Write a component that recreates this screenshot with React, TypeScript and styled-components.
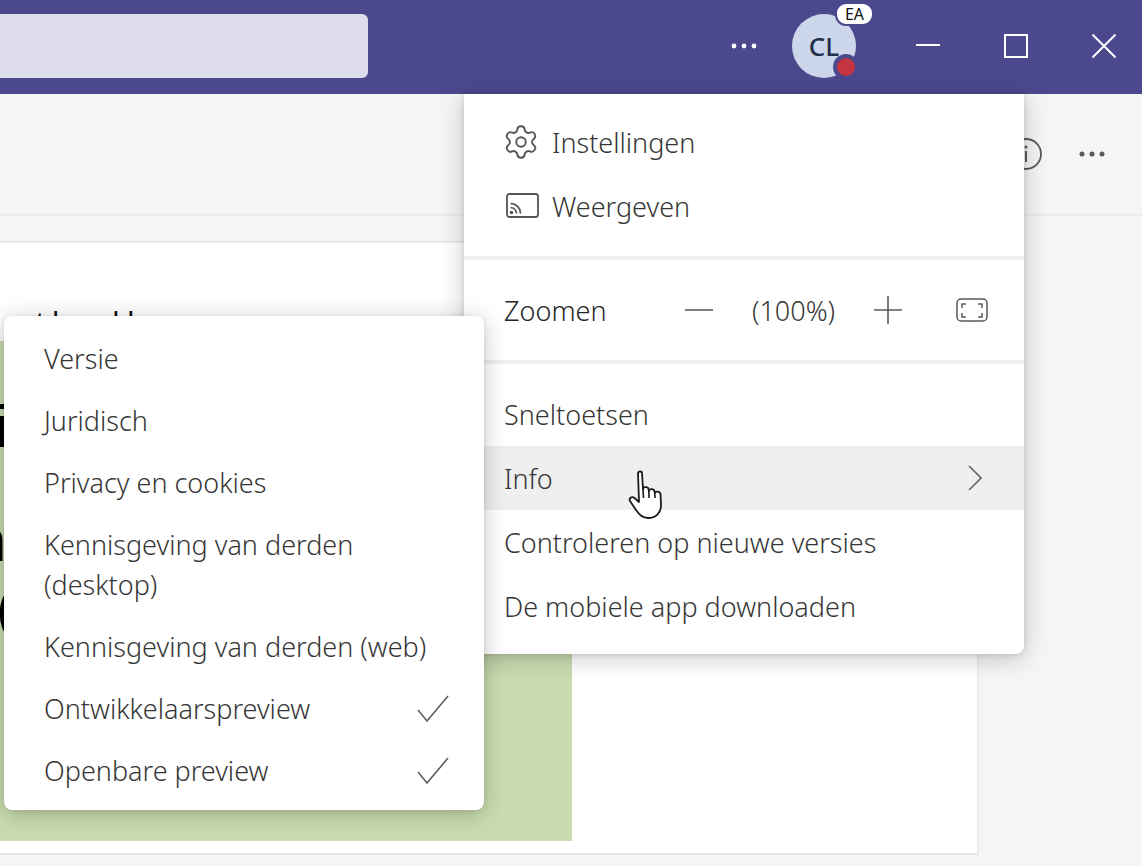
import React from "react";
import styled, { createGlobalStyle } from "styled-components";
import { Settings } from "lucide-react";

const Global = createGlobalStyle`
  html, body { margin: 0; padding: 0; background: #f5f5f5; }
  body { font-family: "Noto Sans", "Open Sans", sans-serif; }
`;

const Page = styled.div`
  position: relative;
  width: 1142px;
  height: 866px;
  overflow: hidden;
  display: flex;
  flex-direction: column;
  background: #f5f5f5;
`;

const TitleBar = styled.header`
  height: 94px;
  flex: none;
  background: #4b488d;
  display: flex;
  align-items: center;
  padding: 0 26px 2px 0;
  box-sizing: border-box;
`;

const SearchBox = styled.div`
  width: 368px;
  height: 64px;
  background: #dcdcea;
  border-radius: 0 6px 6px 0;
`;

const Spacer = styled.div`
  flex: 1;
`;

const TitleIcon = styled.svg<{ $gap?: number }>`
  display: block;
  flex: none;
  margin-left: ${(p) => p.$gap ?? 0}px;
`;

const Avatar = styled.div`
  position: relative;
  width: 64px;
  height: 64px;
  flex: none;
  margin-left: 34px;
  margin-right: 60px;
  border-radius: 50%;
  background: #cdd7ec;
  color: #22304a;
  font-size: 26px;
  font-weight: 500;
  display: flex;
  align-items: center;
  justify-content: center;
`;

const AccountBadge = styled.span`
  position: absolute;
  left: 43px;
  top: -12px;
  width: 35px;
  height: 20px;
  border-radius: 11px;
  background: #fff;
  border: 2px solid #4b488d;
  color: #111;
  font-size: 16px;
  font-weight: 400;
  line-height: 20px;
  text-align: center;
`;

const StatusDot = styled.span`
  position: absolute;
  left: 41px;
  top: 40px;
  width: 18px;
  height: 18px;
  border-radius: 50%;
  background: #c4353f;
  border: 4px solid #4b488d;
`;

const SubHeader = styled.div`
  height: 122px;
  flex: none;
  box-sizing: border-box;
  background: #f5f5f5;
  border-bottom: 2px solid #ececec;
  display: flex;
  align-items: center;
  justify-content: flex-end;
  gap: 36px;
  padding: 0 36px 0 0;
`;

const HeaderIcon = styled.svg`
  display: block;
  flex: none;
`;

const Body = styled.main`
  flex: 1;
  display: flex;
  flex-direction: column;
  padding-top: 25px;
`;

const Card = styled.section`
  width: 979px;
  height: 614px;
  box-sizing: border-box;
  background: #fff;
  border-top: 2px solid #e9e9e9;
  border-right: 2px solid #ececec;
  border-bottom: 2px solid #e6e6e6;
`;

const Caption = styled.div`
  height: 98px;
  box-sizing: border-box;
  padding: 60px 0 0 14px;
  font-family: "Liberation Sans", sans-serif;
  font-size: 30px;
  line-height: 40px;
  color: #111;
  white-space: pre;
`;

const GreenPanel = styled.div`
  width: 572px;
  height: 500px;
  background: #c9dcb0;
  color: #000;
  font-family: "Liberation Sans", sans-serif;
  font-size: 60px;
  line-height: 60px;
  overflow: hidden;
`;

const BigLine = styled.div<{ $top: number; $shift: number }>`
  margin-top: ${(p) => p.$top}px;
  margin-left: ${(p) => p.$shift}px;
`;

const Menu = styled.div`
  position: absolute;
  background: #fff;
  box-shadow: 0 4px 24px rgba(0, 0, 0, 0.22), 0 1px 5px rgba(0, 0, 0, 0.1);
  color: #363636;
  font-size: 27px;
  font-weight: 300;
  box-sizing: border-box;
`;

const MainMenu = styled(Menu)`
  left: 464px;
  top: 94px;
  width: 560px;
  height: 560px;
  border-radius: 0 0 8px 8px;
  display: flex;
  flex-direction: column;
`;

const SubMenu = styled(Menu)`
  left: 4px;
  top: 316px;
  width: 480px;
  height: 494px;
  border-radius: 8px;
  padding: 12px 0 8px;
`;

const MenuSection = styled.div<{ $top: number; $bottom: number }>`
  padding: ${(p) => p.$top}px 0 ${(p) => p.$bottom}px;
`;

const Divider = styled.div`
  height: 4px;
  background: #f0f0f0;
`;

const MenuRow = styled.div<{ $hover?: boolean }>`
  height: 64px;
  display: flex;
  align-items: center;
  padding: 0 42px 0 40px;
  background: ${(p) => (p.$hover ? "#efefef" : "transparent")};
`;

const IconSlot = styled.span`
  width: 48px;
  flex: none;
  display: flex;
  align-items: center;
`;

const GearIcon = styled(Settings)`
  margin-left: -2px;
  flex: none;
`;

const CastIcon = styled.svg`
  margin-left: 2px;
  flex: none;
`;

const RowLabel = styled.span`
  flex: 1;
  white-space: nowrap;
  line-height: 36px;
  padding-top: 2px;
`;

const ZoomRow = styled.div`
  height: 100px;
  display: flex;
  align-items: center;
  padding: 0 36px 0 40px;
  color: #262626;
`;

const ZoomLabel = styled.span`
  width: 181px;
  flex: none;
  padding-top: 1px;
`;

const ZoomValue = styled.span`
  width: 161px;
  flex: none;
  text-align: center;
  color: #363636;
  padding-top: 1px;
`;

const ZoomIcon = styled.svg<{ $gap?: number }>`
  display: block;
  flex: none;
  margin-left: ${(p) => p.$gap ?? 0}px;
`;

const SubRow = styled.div`
  padding: 11px 35px 11px 40px;
  display: flex;
  align-items: center;
  justify-content: space-between;
  line-height: 40px;
`;

const SubLabel = styled.span`
  display: block;
`;

const HandCursor = styled.svg`
  position: absolute;
  left: 628px;
  top: 470px;
`;

const Check = () => (
  <svg width="32" height="28" viewBox="0 0 32 28" fill="none">
    <path d="M1 15 L10 26 L31 1" stroke="#5f5f5f" strokeWidth="1.6" />
  </svg>
);

export default function App() {
  return (
    <Page>
      <Global />
      <TitleBar>
        <SearchBox />
        <Spacer />
        <TitleIcon width="28" height="6" viewBox="0 0 28 6">
          <circle cx="4" cy="3" r="2.4" fill="#fff" />
          <circle cx="14" cy="3" r="2.4" fill="#fff" />
          <circle cx="24" cy="3" r="2.4" fill="#fff" />
        </TitleIcon>
        <Avatar>
          CL
          <AccountBadge>EA</AccountBadge>
          <StatusDot />
        </Avatar>
        <TitleIcon width="24" height="24" viewBox="0 0 24 24">
          <path d="M0 11 H24" stroke="#fff" strokeWidth="2" />
        </TitleIcon>
        <TitleIcon $gap={64} width="24" height="24" viewBox="0 0 24 24">
          <rect x="1" y="1" width="22" height="22" fill="none" stroke="#fff" strokeWidth="2" />
        </TitleIcon>
        <TitleIcon $gap={64} width="24" height="24" viewBox="0 0 24 24">
          <path d="M0.5 0.5 L23.5 23.5 M23.5 0.5 L0.5 23.5" stroke="#fff" strokeWidth="2" />
        </TitleIcon>
      </TitleBar>

      <SubHeader>
        <HeaderIcon width="32" height="32" viewBox="0 0 32 32" fill="none">
          <circle cx="16" cy="16" r="15" stroke="#5a5a5a" strokeWidth="1.8" />
          <path d="M16 13 V24" stroke="#5a5a5a" strokeWidth="2" />
          <circle cx="16" cy="9" r="1.5" fill="#5a5a5a" />
        </HeaderIcon>
        <HeaderIcon width="28" height="6" viewBox="0 0 28 6">
          <circle cx="4" cy="3" r="2.5" fill="#5a5a5a" />
          <circle cx="14" cy="3" r="2.5" fill="#5a5a5a" />
          <circle cx="24" cy="3" r="2.5" fill="#5a5a5a" />
        </HeaderIcon>
      </SubHeader>

      <Body>
        <Card>
          <Caption>{"wt hand l"}</Caption>
          <GreenPanel>
            <BigLine $top={56} $shift={-5}>i</BigLine>
            <BigLine $top={54} $shift={-27}>n</BigLine>
            <BigLine $top={8} $shift={-4}>(</BigLine>
          </GreenPanel>
        </Card>
      </Body>

      <MainMenu>
        <MenuSection $top={16} $bottom={18}>
          <MenuRow>
            <IconSlot>
              <GearIcon size={38} strokeWidth={1.2} color="#555" />
            </IconSlot>
            <RowLabel>Instellingen</RowLabel>
          </MenuRow>
          <MenuRow>
            <IconSlot>
              <CastIcon width="33" height="26" viewBox="0 0 33 26" fill="none">
                <rect x="1" y="1" width="31" height="23" rx="2.5" stroke="#555" strokeWidth="1.8" />
                <path d="M4.5 10.5 a10 10 0 0 1 10 10 M4.5 14.5 a6 6 0 0 1 6 6" stroke="#555" strokeWidth="1.7" />
                <circle cx="5.5" cy="19.5" r="1.8" fill="#555" />
              </CastIcon>
            </IconSlot>
            <RowLabel>Weergeven</RowLabel>
          </MenuRow>
        </MenuSection>
        <Divider />
        <ZoomRow>
          <ZoomLabel>Zoomen</ZoomLabel>
          <ZoomIcon width="28" height="4" viewBox="0 0 28 4">
            <path d="M0 2 H28" stroke="#5a5a5a" strokeWidth="1.6" />
          </ZoomIcon>
          <ZoomValue>(100%)</ZoomValue>
          <ZoomIcon width="28" height="28" viewBox="0 0 28 28">
            <path d="M0 14 H28 M14 0 V28" stroke="#5a5a5a" strokeWidth="1.6" />
          </ZoomIcon>
          <ZoomIcon $gap={54} width="32" height="24" viewBox="0 0 32 24" fill="none">
            <rect x="1" y="1" width="30" height="22" rx="4" stroke="#5a5a5a" strokeWidth="1.5" />
            <path d="M6 10 V6 H10 M22 6 H26 V10 M26 15 V19 H22 M10 19 H6 V15" stroke="#5a5a5a" strokeWidth="1.5" />
          </ZoomIcon>
        </ZoomRow>
        <Divider />
        <MenuSection $top={18} $bottom={16}>
          <MenuRow>
            <RowLabel>Sneltoetsen</RowLabel>
          </MenuRow>
          <MenuRow $hover>
            <RowLabel>Info</RowLabel>
            <svg width="14" height="26" viewBox="0 0 14 26" fill="none">
              <path d="M1 1 L13 13 L1 25" stroke="#666" strokeWidth="1.6" />
            </svg>
          </MenuRow>
          <MenuRow>
            <RowLabel>Controleren op nieuwe versies</RowLabel>
          </MenuRow>
          <MenuRow>
            <RowLabel>De mobiele app downloaden</RowLabel>
          </MenuRow>
        </MenuSection>
      </MainMenu>

      <SubMenu>
        <SubRow><SubLabel>Versie</SubLabel></SubRow>
        <SubRow><SubLabel>Juridisch</SubLabel></SubRow>
        <SubRow><SubLabel>Privacy en cookies</SubLabel></SubRow>
        <SubRow>
          <SubLabel>
            Kennisgeving van derden
            <br />
            (desktop)
          </SubLabel>
        </SubRow>
        <SubRow><SubLabel>Kennisgeving van derden (web)</SubLabel></SubRow>
        <SubRow>
          <SubLabel>Ontwikkelaarspreview</SubLabel>
          <Check />
        </SubRow>
        <SubRow>
          <SubLabel>Openbare preview</SubLabel>
          <Check />
        </SubRow>
      </SubMenu>

      <HandCursor width="36" height="50" viewBox="0 0 36 50">
        <path
          d="M10 3 C10 1 14 1 14 3 L15 19 C15 17 20 16 20.5 19 L21 21 C21 19 26 18 26.5 21.5 L27 23 C27 21 32 21 32.5 24 L33 35 C33 44 27 48 20 48 C14 48 11 44 8 40 L2 31 C0.5 28 4 26 6.5 28 L11 32 Z"
          fill="#fff"
          stroke="#1a1a1a"
          strokeWidth="1.8"
          strokeLinejoin="round"
        />
        <path d="M15 19 L15.5 28 M20.8 20 L21 28 M26.7 22 L27 28" stroke="#1a1a1a" strokeWidth="1.6" />
      </HandCursor>
    </Page>
  );
}
